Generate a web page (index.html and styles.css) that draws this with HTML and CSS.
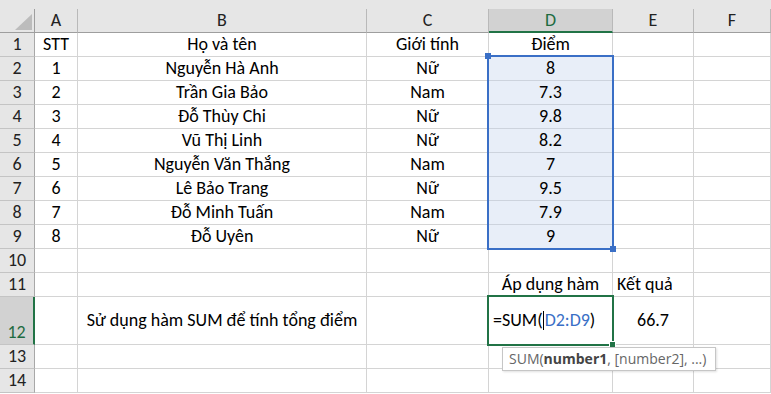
FILE: index.html
```html
<!DOCTYPE html>
<html lang="vi">
  <head>
    <meta charset="UTF-8" />
    <title>Bảng điểm</title>
    <link rel="stylesheet" href="styles.css">
  </head>
  <body>
    <div class="sheet">
      <div class="row head">
        <div class="corner"><span class="tri"></span></div>
        <div class="ch">A</div>
        <div class="ch">B</div>
        <div class="ch">C</div>
        <div class="ch on">D</div>
        <div class="ch">E</div>
        <div class="ch">F</div>
      </div>

      <div class="row">
        <div class="rh">1</div>
        <div class="c">STT</div><div class="c">Họ và tên</div><div class="c">Giới tính</div><div class="c">Điểm</div><div class="c"></div><div class="c"></div>
      </div>
      <div class="row">
        <div class="rh">2</div>
        <div class="c">1</div><div class="c">Nguyễn Hà Anh</div><div class="c">Nữ</div><div class="c pick">8</div><div class="c"></div><div class="c"></div>
      </div>
      <div class="row">
        <div class="rh">3</div>
        <div class="c">2</div><div class="c">Trần Gia Bảo</div><div class="c">Nam</div><div class="c pick">7.3</div><div class="c"></div><div class="c"></div>
      </div>
      <div class="row">
        <div class="rh">4</div>
        <div class="c">3</div><div class="c">Đỗ Thùy Chi</div><div class="c">Nữ</div><div class="c pick">9.8</div><div class="c"></div><div class="c"></div>
      </div>
      <div class="row">
        <div class="rh">5</div>
        <div class="c">4</div><div class="c">Vũ Thị Linh</div><div class="c">Nữ</div><div class="c pick">8.2</div><div class="c"></div><div class="c"></div>
      </div>
      <div class="row">
        <div class="rh">6</div>
        <div class="c">5</div><div class="c">Nguyễn Văn Thắng</div><div class="c">Nam</div><div class="c pick">7</div><div class="c"></div><div class="c"></div>
      </div>
      <div class="row">
        <div class="rh">7</div>
        <div class="c">6</div><div class="c">Lê Bảo Trang</div><div class="c">Nữ</div><div class="c pick">9.5</div><div class="c"></div><div class="c"></div>
      </div>
      <div class="row">
        <div class="rh">8</div>
        <div class="c">7</div><div class="c">Đỗ Minh Tuấn</div><div class="c">Nam</div><div class="c pick">7.9</div><div class="c"></div><div class="c"></div>
      </div>
      <div class="row">
        <div class="rh">9</div>
        <div class="c">8</div><div class="c">Đỗ Uyên</div><div class="c">Nữ</div><div class="c pick">9</div><div class="c"></div><div class="c"></div>
      </div>
      <div class="row">
        <div class="rh">10</div>
        <div class="c"></div><div class="c"></div><div class="c"></div><div class="c"></div><div class="c"></div><div class="c"></div>
      </div>
      <div class="row">
        <div class="rh">11</div>
        <div class="c"></div><div class="c"></div><div class="c"></div><div class="c">Áp dụng hàm</div><div class="c left">Kết quả</div><div class="c"></div>
      </div>
      <div class="row tall">
        <div class="rh on">12</div>
        <div class="c"></div>
        <div class="c">Sử dụng hàm SUM để tính tổng điểm</div>
        <div class="c"></div>
        <div class="c left formula">=SUM(<span class="caret"></span><span class="ref">D2:D9</span>)</div>
        <div class="c">66.7</div>
        <div class="c"></div>
      </div>
      <div class="row">
        <div class="rh">13</div>
        <div class="c"></div><div class="c"></div><div class="c"></div><div class="c"></div><div class="c"></div><div class="c"></div>
      </div>
      <div class="row">
        <div class="rh">14</div>
        <div class="c"></div><div class="c"></div><div class="c"></div><div class="c"></div><div class="c"></div><div class="c"></div>
      </div>

      <!-- overlays -->
      <div class="range">
        <span class="dot tl"></span>
        <span class="dot br"></span>
      </div>
      <div class="active"><span class="fill"></span></div>
      <div class="tip">SUM(<b>number1</b>, [number2], ...)</div>
    </div>
  </body>
</html>
```

FILE: styles.css
```css
body {
  margin: 0;
  padding: 0;
  background: #fff;
  font-family: Carlito, Lato, "Liberation Sans", sans-serif;
  font-size: 18px;
  color: #000;
}

.sheet {
  position: relative;
  width: 771px;
  height: 394px;
  overflow: hidden;
}

.row {
  display: grid;
  grid-template-columns: 35px 43px 289px 122px 124px 81px 1fr;
}

.head {
  background: #e6e6e6;
  padding-top: 9px;
}

.corner,
.ch {
  height: 24px;
  box-sizing: border-box;
  border-right: 1px solid #b9b9b9;
  border-bottom: 1px solid #9e9e9e;
  text-align: center;
  line-height: 22px;
  color: #222;
}

.corner {
  position: relative;
  border-right-color: #9e9e9e;
}

.tri {
  position: absolute;
  right: 2px;
  bottom: 2px;
  width: 17px;
  height: 16px;
  background: #bcbcbc;
  clip-path: polygon(100% 0, 100% 100%, 0 100%);
}

.ch.on {
  background: #d2d2d2;
  color: #1e6b41;
  border-bottom: 2px solid #217346;
}

.rh,
.c {
  height: 24px;
  box-sizing: border-box;
  border-right: 1px solid #d4d4d4;
  border-bottom: 1px solid #d4d4d4;
  line-height: 23px;
  text-align: center;
  white-space: nowrap;
}

.rh {
  background: #e6e6e6;
  border-right-color: #a8a8a8;
  border-bottom-color: #c4c4c4;
  color: #222;
}

.tall .c,
.tall .rh {
  height: 48px;
}

.tall .c {
  line-height: 46px;
}

.tall .rh {
  line-height: 20px;
  padding-top: 25px;
}

.rh.on {
  background: #d2d2d2;
  color: #1e6b41;
  border-right: 2px solid #217346;
}

.c.left {
  text-align: left;
  padding-left: 4px;
}

.pick {
  background: #e8eef8;
  border-bottom-color: #cdd3dd;
}

.ref {
  color: #3a6fc6;
}

.caret {
  display: inline-block;
  width: 1px;
  height: 19px;
  background: #000;
  vertical-align: -4px;
  margin-right: 1px;
}

.range {
  position: absolute;
  left: 487px;
  top: 55px;
  width: 127px;
  height: 195px;
  box-sizing: border-box;
  border: 2px solid #3a6fc6;
}

.dot {
  position: absolute;
  width: 6px;
  height: 6px;
  background: #3a6fc6;
}

.dot.tl {
  left: -4px;
  top: -4px;
}

.dot.br {
  right: -4px;
  bottom: -4px;
}

.active {
  position: absolute;
  left: 487px;
  top: 295px;
  width: 127px;
  height: 51px;
  box-sizing: border-box;
  border: 2px solid #217346;
}

.fill {
  position: absolute;
  right: -4px;
  bottom: -4px;
  width: 5px;
  height: 5px;
  background: #217346;
  border: 1px solid #fff;
}

.tip {
  position: absolute;
  left: 502px;
  top: 347px;
  width: 214px;
  height: 24px;
  box-sizing: border-box;
  padding-left: 6px;
  background: #fff;
  border: 1px solid #c6c6c6;
  box-shadow: 1px 1px 2px rgba(0, 0, 0, 0.12);
  font-family: "Open Sans", "Noto Sans", sans-serif;
  font-size: 14px;
  line-height: 21px;
  color: #666;
  white-space: nowrap;
}

.tip b {
  color: #444;
}
```
